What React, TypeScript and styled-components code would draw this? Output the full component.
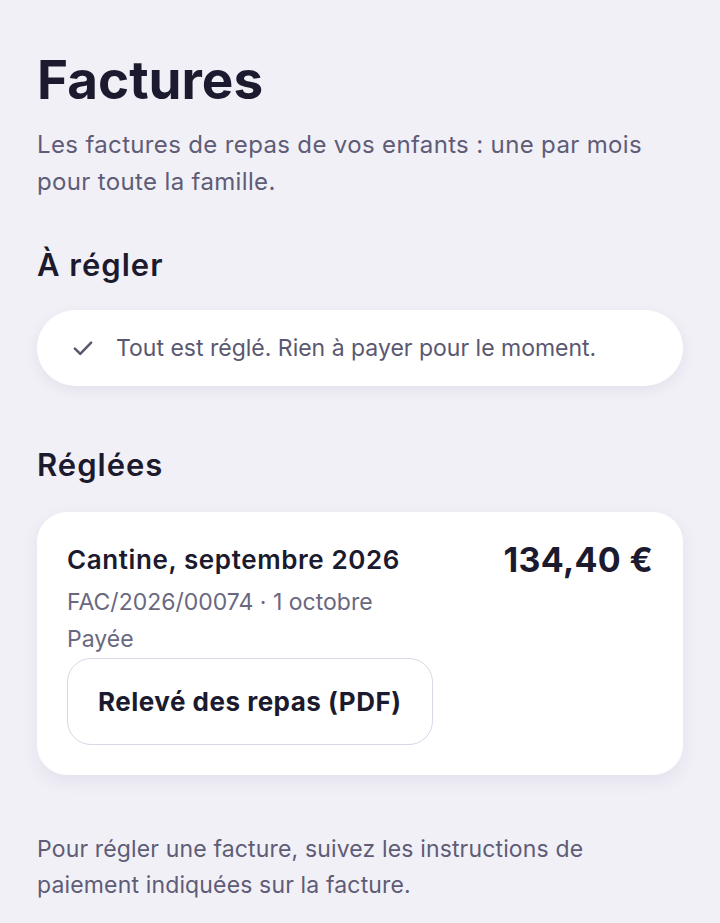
import React from "react";
import styled, { createGlobalStyle } from "styled-components";

const GlobalStyle = createGlobalStyle`
    html, body {
        margin: 0;
        padding: 0;
        background: #f1f0f7;
    }
    body {
        font-family: Inter, "Noto Sans", "Liberation Sans", sans-serif;
        color: #1b1a2e;
    }
`

function CheckIcon(): React.ReactElement {
    return (
        <svg width="26" height="26" viewBox="0 0 24 24" fill="none"
            stroke="#5a5870" strokeWidth="2.3" strokeLinecap="round" strokeLinejoin="round">
            <path d="M4.5 12.5l5 5L19.5 7" />
        </svg>
    )
}

function App(): React.ReactElement {
    return (
        <Page>
            <GlobalStyle />
            <Title>Factures</Title>
            <Lead>Les factures de repas de vos enfants : une par mois pour toute la famille.</Lead>

            <Section>
                <SectionTitle>À régler</SectionTitle>
                <EmptyPill>
                    <CheckIcon />
                    <PillText>Tout est réglé. Rien à payer pour le moment.</PillText>
                </EmptyPill>
            </Section>

            <Section $gap={61}>
                <SectionTitle $space={29}>Réglées</SectionTitle>
                <InvoiceCard>
                    <InvoiceHead>
                        <InvoiceInfo>
                            <InvoiceName>Cantine, septembre 2026</InvoiceName>
                            <Meta>FAC/2026/00074 · 1 octobre</Meta>
                            <Meta>Payée</Meta>
                        </InvoiceInfo>
                        <Amount>134,40 €</Amount>
                    </InvoiceHead>
                    <PdfButton type="button">Relevé des repas (PDF)</PdfButton>
                </InvoiceCard>
            </Section>

            <Footnote>Pour régler une facture, suivez les instructions de paiement indiquées sur la facture.</Footnote>
        </Page>
    )
}

const Page = styled.div`
    min-height: 923px;
    box-sizing: border-box;
    padding: 46px 37px 30px;
    background: #f1f0f7;
`

const Title = styled.h1`
    margin: 0;
    font-size: 53px;
    font-weight: 700;
    line-height: 68px;
    color: #1b1a2e;
`

const Lead = styled.p`
    margin: 12px 0 0;
    padding-right: 30px;
    font-size: 24px;
    line-height: 37px;
    letter-spacing: 0.35px;
    color: #5e5c76;
`

const Section = styled.section<{ $gap?: number }>`
    margin-top: ${(p) => p.$gap ?? 47}px;
`

const SectionTitle = styled.h2<{ $space?: number }>`
    margin: 0 0 ${(p) => p.$space ?? 27}px;
    font-size: 31px;
    font-weight: 600;
    line-height: 36px;
    letter-spacing: 1px;
    color: #1b1a2e;
`

const EmptyPill = styled.div`
    display: flex;
    align-items: center;
    gap: 20px;
    height: 76px;
    padding: 0 33px;
    border-radius: 38px;
    background: #ffffff;
    box-shadow: 0 4px 14px rgba(40, 36, 80, 0.07);
`

const PillText = styled.span`
    font-size: 23px;
    color: #5a5870;
`

const InvoiceCard = styled.div`
    padding: 28px 30px 30px;
    border-radius: 30px;
    background: #ffffff;
    box-shadow: 0 6px 18px rgba(40, 36, 80, 0.07);
`

const InvoiceHead = styled.div`
    display: flex;
    justify-content: space-between;
    align-items: flex-start;
`

const InvoiceInfo = styled.div`
    display: flex;
    flex-direction: column;
`

const InvoiceName = styled.div`
    margin-bottom: 4px;
    font-size: 26px;
    font-weight: 600;
    line-height: 40px;
    letter-spacing: 0.6px;
    color: #1b1a2e;
`

const Meta = styled.div`
    font-size: 23px;
    line-height: 37px;
    color: #6a6880;
`

const Amount = styled.div`
    font-size: 34px;
    font-weight: 700;
    line-height: 40px;
    letter-spacing: 0.3px;
    color: #1b1a2e;
`

const PdfButton = styled.button`
    display: block;
    height: 87px;
    padding: 0 30px;
    border: 1.5px solid #d9d7e8;
    border-radius: 24px;
    background: #ffffff;
    font-family: inherit;
    font-size: 26px;
    font-weight: 700;
    letter-spacing: 0.5px;
    color: #1b1a2e;
    cursor: pointer;
`

const Footnote = styled.p`
    margin: 56px 0 0;
    padding-right: 90px;
    font-size: 23px;
    line-height: 36px;
    letter-spacing: 0.15px;
    color: #5e5c76;
`

export default App;
